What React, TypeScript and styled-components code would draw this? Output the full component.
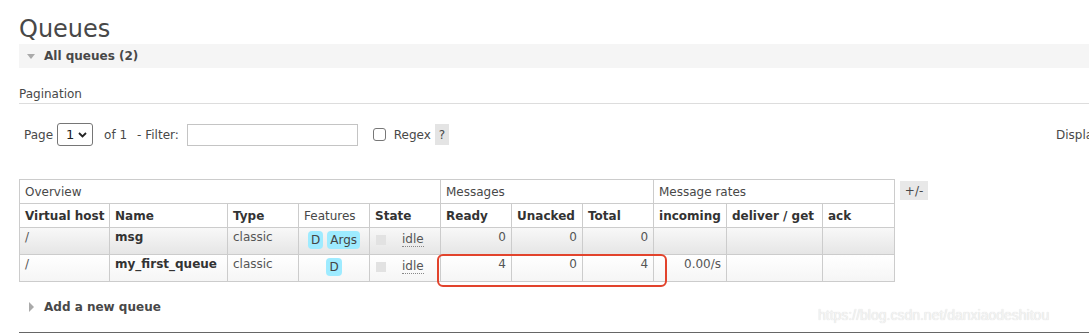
import React from "react";
import styled, { createGlobalStyle } from "styled-components";

const Global = createGlobalStyle`
  html, body {
    margin: 0;
    padding: 0;
    overflow: hidden;
    background: #fff;
  }
  body {
    font-family: "DejaVu Sans", Verdana, sans-serif;
    font-size: 12px;
    color: #484848;
  }
`;

const columns = [90, 118, 71, 71, 71, 71, 71, 71, 73, 96, 72];

type Queue = {
  vhost: string;
  name: string;
  type: string;
  features: string[];
  state: string;
  ready: number;
  unacked: number;
  total: number;
  incoming: string;
};

const queues: Queue[] = [
  { vhost: "/", name: "msg", type: "classic", features: ["D", "Args"], state: "idle", ready: 0, unacked: 0, total: 0, incoming: "" },
  { vhost: "/", name: "my_first_queue", type: "classic", features: ["D"], state: "idle", ready: 4, unacked: 0, total: 4, incoming: "0.00/s" },
];

const App = () => {
  return (
    <>
      <Global />
      <Page>
        <Title>Queues</Title>
        <SectionBar>
          <DownTriangle />
          All queues ({queues.length})
        </SectionBar>

        <SubHeading>Pagination</SubHeading>
        <PagerRow>
          <PagerLeft>
            <Text>Page</Text>
            <SelectBox>
              1
              <svg width="9" height="6" viewBox="0 0 9 6">
                <path d="M1 1l3.5 3.5L8 1" fill="none" stroke="#222" strokeWidth="1.8" />
              </svg>
            </SelectBox>
            <Text $gap={10}>of 1</Text>
            <Text $gap={8}>- Filter:</Text>
            <FilterInput />
            <CheckBox />
            <Text $gap={4}>Regex</Text>
            <Help>?</Help>
          </PagerLeft>
          <Text>Displaying {queues.length} items , page size up to:</Text>
        </PagerRow>

        <TableRow>
          <TableWrap>
            <List>
              <colgroup>
                {columns.map((w, i) => (
                  <col key={i} style={{ width: w }} />
                ))}
              </colgroup>
              <thead>
                <HeadRow>
                  <GroupHead colSpan={5}>Overview</GroupHead>
                  <GroupHead colSpan={3}>Messages</GroupHead>
                  <GroupHead colSpan={3}>Message rates</GroupHead>
                </HeadRow>
                <HeadRow>
                  <Head>Virtual host</Head>
                  <Head>Name</Head>
                  <Head>Type</Head>
                  <Head $plain>Features</Head>
                  <Head>State</Head>
                  <Head>Ready</Head>
                  <Head>Unacked</Head>
                  <Head>Total</Head>
                  <Head>incoming</Head>
                  <Head>deliver / get</Head>
                  <Head>ack</Head>
                </HeadRow>
              </thead>
              <tbody>
                {queues.map((q, i) => (
                  <DataRow key={q.name} $alt={i % 2 === 0}>
                    <Cell>{q.vhost}</Cell>
                    <Cell $bold>{q.name}</Cell>
                    <Cell>{q.type}</Cell>
                    <Cell $align="center">
                      {q.features.map((f) => (
                        <Badge key={f}>{f}</Badge>
                      ))}
                    </Cell>
                    <Cell>
                      <StateLine>
                        <StateDot />
                        <StateText>{q.state}</StateText>
                      </StateLine>
                    </Cell>
                    <Cell $align="right">{q.ready}</Cell>
                    <Cell $align="right">{q.unacked}</Cell>
                    <Cell $align="right">{q.total}</Cell>
                    <Cell $align="right">{q.incoming}</Cell>
                    <Cell />
                    <Cell />
                  </DataRow>
                ))}
              </tbody>
            </List>
            <Highlight />
          </TableWrap>
          <Toggle>+/-</Toggle>
        </TableRow>

        <AddSection>
          <RightTriangle />
          Add a new queue
        </AddSection>
        <FooterRule />
        <Watermark>https://blog.csdn.net/danxiaodeshitou</Watermark>
      </Page>
    </>
  );
};

export default App;

const Page = styled.div`
  position: relative;
  width: 1400px;
  height: 335px;
  padding-left: 19px;
  box-sizing: border-box;
`;

const Title = styled.h1`
  margin: 0;
  padding-top: 15px;
  font-size: 24px;
  line-height: 28px;
  font-weight: normal;
  color: #484848;
`;

const SectionBar = styled.div`
  display: flex;
  align-items: center;
  height: 24px;
  margin-top: 1px;
  padding-left: 8px;
  background: #f5f5f5;
  font-weight: bold;
  color: #484848;
`;

const DownTriangle = styled.span`
  width: 0;
  height: 0;
  margin-right: 9px;
  border-left: 4.5px solid transparent;
  border-right: 4.5px solid transparent;
  border-top: 5px solid #aaa;
`;

const RightTriangle = styled.span`
  width: 0;
  height: 0;
  margin: 0 10px 0 10px;
  border-top: 5px solid transparent;
  border-bottom: 5px solid transparent;
  border-left: 5px solid #aaa;
`;

const SubHeading = styled.h3`
  margin: 18px 0 0;
  padding-bottom: 1px;
  font-size: 12px;
  line-height: 16px;
  font-weight: normal;
  border-bottom: 1px solid #ddd;
`;

const PagerRow = styled.div`
  display: flex;
  align-items: center;
  margin-top: 19px;
  padding-left: 5px;
  height: 23px;
`;

const PagerLeft = styled.div`
  display: flex;
  align-items: center;
  flex: 0 0 1032px;
`;

const Text = styled.span<{ $gap?: number }>`
  margin-right: ${(p) => p.$gap ?? 0}px;
  white-space: nowrap;
`;

const SelectBox = styled.span`
  display: flex;
  align-items: center;
  justify-content: space-between;
  box-sizing: border-box;
  width: 36px;
  height: 23px;
  margin: 0 11px 0 4px;
  padding: 0 5px 0 8px;
  border: 1px solid #767676;
  border-radius: 3px;
  color: #222;
  font-size: 13px;
`;

const FilterInput = styled.input`
  box-sizing: border-box;
  width: 171px;
  height: 22px;
  margin: 0 15px 0 0;
  border: 1px solid #c4c4c4;
  padding: 0 3px;
`;

const CheckBox = styled.span`
  box-sizing: border-box;
  width: 13px;
  height: 13px;
  margin-right: 8px;
  border: 1px solid #777;
  border-radius: 3px;
`;

const Help = styled.span`
  display: flex;
  align-items: center;
  justify-content: center;
  width: 14px;
  height: 21px;
  background: #e4e4e4;
  color: #484848;
`;

const TableRow = styled.div`
  display: flex;
  align-items: flex-start;
  gap: 5px;
  margin-top: 33px;
`;

const TableWrap = styled.div`
  position: relative;
`;

const List = styled.table`
  table-layout: fixed;
  width: 875px;
  border-collapse: collapse;
  font-size: 12px;
`;

const HeadRow = styled.tr`
  height: 24px;
`;

const GroupHead = styled.th`
  padding: 0 5px;
  border: 1px solid #ccc;
  text-align: left;
  font-weight: normal;
  color: #484848;
  background: #fff;
`;

const Head = styled.th<{ $plain?: boolean }>`
  padding: 0 5px;
  border: 1px solid #ccc;
  text-align: left;
  white-space: nowrap;
  font-weight: ${(p) => (p.$plain ? "normal" : "bold")};
  color: ${(p) => (p.$plain ? "#484848" : "#333")};
  background: #fff;
`;

const DataRow = styled.tr<{ $alt: boolean }>`
  height: 27px;
  background: ${(p) =>
    p.$alt
      ? "linear-gradient(#f8f8f8, #e5e5e5)"
      : "linear-gradient(#ffffff, #f5f5f5)"};
`;

const Cell = styled.td<{ $align?: string; $bold?: boolean }>`
  padding: 2px 5px 0;
  vertical-align: top;
  line-height: 15px;
  border: 1px solid #ccc;
  white-space: nowrap;
  text-align: ${(p) => p.$align ?? "left"};
  font-weight: ${(p) => (p.$bold ? "bold" : "normal")};
  color: ${(p) => (p.$bold ? "#333" : "#555")};
`;

const Badge = styled.span`
  display: inline-block;
  margin: 1px 2px 0;
  padding: 2px 3px;
  border-radius: 4px;
  background: #9eebff;
  color: #444;
  line-height: 14px;
`;

const StateLine = styled.div`
  display: flex;
  align-items: center;
  padding: 2px 0 0 1px;
`;

const StateDot = styled.span`
  width: 10px;
  height: 10px;
  margin-right: 16px;
  background: #e2e2e2;
`;

const StateText = styled.span`
  border-bottom: 1px dotted #888;
  line-height: 14px;
`;

const Highlight = styled.div`
  position: absolute;
  left: 418px;
  top: 75px;
  width: 230px;
  height: 33px;
  box-sizing: border-box;
  border: 2px solid #e2432c;
  border-radius: 6px;
`;

const Toggle = styled.span`
  display: flex;
  align-items: center;
  justify-content: center;
  width: 28px;
  height: 19px;
  margin-top: 2px;
  background: #e8e8e8;
  color: #484848;
`;

const AddSection = styled.div`
  display: flex;
  align-items: center;
  height: 20px;
  margin-top: 15px;
  font-weight: bold;
  color: #484848;
`;

const FooterRule = styled.div`
  margin-top: 15px;
  border-top: 1px solid #666;
`;

const Watermark = styled.span`
  position: absolute;
  left: 818px;
  top: 307px;
  font-family: "Liberation Sans", Arial, sans-serif;
  font-size: 14px;
  color: #f4f4f4;
  text-shadow: 0 0 1px #d0d0d0;
  white-space: nowrap;
`;
